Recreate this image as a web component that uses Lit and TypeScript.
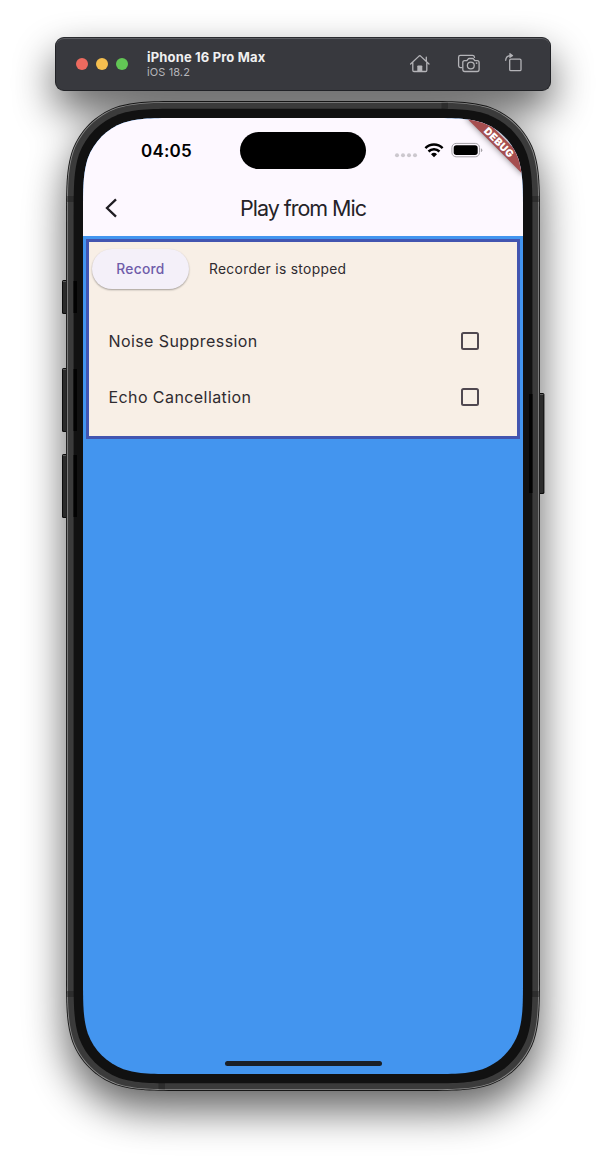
import { LitElement, html, svg, css } from "lit";
import { customElement, property } from "lit/decorators.js";

/** Path of a rectangle with continuous (squircle-like) corners. */
function smoothRect(x: number, y: number, w: number, h: number, r: number): string {
  const a = 1.52866 * r, b = 1.08849 * r, c = 0.86841 * r;
  const d = 0.63149 * r, e = 0.07491 * r, f = 0.37282 * r, g = 0.16906 * r;
  const R = x + w, B = y + h;
  return [
    `M${x + a} ${y}L${R - a} ${y}`,
    `C${R - b} ${y} ${R - c} ${y} ${R - d} ${y + e}`,
    `C${R - f} ${y + g} ${R - g} ${y + f} ${R - e} ${y + d}`,
    `C${R} ${y + c} ${R} ${y + b} ${R} ${y + a}L${R} ${B - a}`,
    `C${R} ${B - b} ${R} ${B - c} ${R - e} ${B - d}`,
    `C${R - g} ${B - f} ${R - f} ${B - g} ${R - d} ${B - e}`,
    `C${R - c} ${B} ${R - b} ${B} ${R - a} ${B}L${x + a} ${B}`,
    `C${x + b} ${B} ${x + c} ${B} ${x + d} ${B - e}`,
    `C${x + f} ${B - g} ${x + g} ${B - f} ${x + e} ${B - d}`,
    `C${x} ${B - c} ${x} ${B - b} ${x} ${B - a}L${x} ${y + a}`,
    `C${x} ${y + b} ${x} ${y + c} ${x + e} ${y + d}`,
    `C${x + g} ${y + f} ${x + f} ${y + g} ${x + d} ${y + e}`,
    `C${x + c} ${y} ${x + b} ${y} ${x + a} ${y}Z`,
  ].join("");
}

const SIDE_KEYS = [
  { x: 62, y: 280, h: 34, well: 73.5 },
  { x: 62, y: 368, h: 64, well: 73.5 },
  { x: 62, y: 454, h: 64, well: 73.5 },
  { x: 538, y: 393, h: 101, well: 529 },
];

@customElement("device-frame")
export class DeviceFrame extends LitElement {
  static styles = css`
    :host { display: block; }
    svg { display: block; }
  `;
  render() {
    return html`<svg width="606" height="1166" viewBox="0 0 606 1166">
      <defs>
        <filter id="soft" x="-30%" y="-30%" width="160%" height="160%">
          <feGaussianBlur stdDeviation="21" />
        </filter>
      </defs>
      <g filter="url(#soft)" opacity="0.62" transform="translate(0 19)">
        <rect x="55" y="37" width="496" height="54" rx="9" />
        <path d=${smoothRect(66, 101, 474, 990, 79)} />
      </g>
      ${SIDE_KEYS.map((k) => svg`
        <rect x=${k.x} y=${k.y} width="6.4" height=${k.h} rx="1.5" fill="#0c0c0c"/>
        <rect x=${k.x + 1} y=${k.y + 1} width="4.4" height=${k.h - 2} rx="1" fill="#2b2b2b"/>
        <rect x=${k.x + 1} y=${k.y + 1} width="4.4" height="0.8" fill="#6a6a6a"/>`)}
      <path d=${smoothRect(66, 101, 474, 990, 79)} fill="#161616" />
      <path d=${smoothRect(66.9, 101.9, 472.2, 988.2, 78.2)} fill="#8b8b8b" />
      <path d=${smoothRect(67.8, 102.8, 470.4, 986.4, 77.4)} fill="#3b3b3b" />
      <g fill="#2d2d2d">
        <rect x="67.500" y="196" width="7" height="6" />
        <rect x="531" y="196" width="7.500" height="6" />
        <rect x="67.500" y="991" width="7" height="6" />
        <rect x="531" y="991" width="7.500" height="6" />
        <rect x="441.500" y="102.800" width="6.500" height="7" />
        <rect x="158.500" y="1082" width="6.500" height="7.200" />
      </g>
      <path d=${smoothRect(73.6, 108.8, 458.8, 974.5, 72)} fill="#111" />
      ${SIDE_KEYS.map((k) => svg`<rect x=${k.well} y=${k.y + 1} width="3.5" height=${k.h - 2} fill="#020202"/>`)}
    </svg>`;
  }
}

@customElement("simulator-bar")
export class SimulatorBar extends LitElement {
  static styles = css`
    :host {
      display: flex;
      align-items: center;
      box-sizing: border-box;
      width: 496px;
      height: 54px;
      padding: 0 26px 0 21px;
      border: 1px solid #212226;
      border-top-color: #2a2b2f;
      border-radius: 9px;
      background: #38393e;
      box-shadow: inset 0 1px 0 #5c5d62;
      font-family: Inter, sans-serif;
    }
    .lights { display: flex; gap: 8px; margin-left: -1px; }
    .light { width: 12px; height: 12px; border-radius: 50%; }
    .close { background: #ed6a5f; }
    .min { background: #f5bf4f; }
    .max { background: #62c655; }
    .titles { flex: 1; margin-left: 19px; }
    .name { font-size: 13px; font-weight: 700; line-height: 15px; color: #f0f0f1; letter-spacing: 0.16px; white-space: nowrap; }
    .os { font-size: 11px; line-height: 14px; color: #b6b6ba; letter-spacing: 0.1px; }
    svg { display: block; fill: none; stroke: #b4b4b8; stroke-width: 1.3; stroke-linecap: round; stroke-linejoin: round; }
    .solid { fill: #b4b4b8; stroke: none; }
  `;
  render() {
    return html`
      <div class="lights">
        <div class="light close"></div><div class="light min"></div><div class="light max"></div>
      </div>
      <div class="titles">
        <div class="name">iPhone 16 Pro Max</div>
        <div class="os">iOS 18.2</div>
      </div>
      <svg width="118" height="24" viewBox="406 52 118 24">
        <path d="M410.600 64L419 56.100Q419.800 55.400 420.600 56.100L429 64M426.300 61V57.200M412.800 62.400V70.300Q412.800 71.500 414 71.500H425.600Q426.800 71.500 426.800 70.300V62.400" />
        <path class="solid" d="M417.300 71.500V66.300Q417.300 65.500 418.100 65.500H421.500Q422.300 65.500 422.300 66.300V71.500Z" />
        <path d="M461.800 67.600H460.400Q458.600 67.600 458.600 65.800V57.200Q458.600 55.400 460.400 55.400H472.500Q474.200 55.400 474.500 57.300" />
        <path d="M464.700 60.700H466.200Q466.900 60.700 467.300 60.100L468 59.100Q468.400 58.500 469.100 58.500H472.600Q473.300 58.500 473.700 59.100L474.400 60.100Q474.800 60.700 475.500 60.700H477.200Q479.100 60.700 479.100 62.600V69.600Q479.100 71.500 477.200 71.500H464.700Q462.800 71.500 462.800 69.600V62.600Q462.800 60.700 464.700 60.700Z" />
        <circle cx="470.800" cy="65.500" r="3.400" />
        <circle class="solid" cx="476.600" cy="63.100" r="0.900" />
        <rect x="509.700" y="59.100" width="11.300" height="11.500" rx="1.200" />
        <path d="M505.700 60.300Q505.900 55.600 511 55.600" />
        <path class="solid" d="M509.400 53.300Q509.400 52.700 510 53L513 55.200Q513.400 55.600 513 56L510 58.100Q509.400 58.400 509.400 57.800Z" />
      </svg>`;
  }
}

@customElement("status-bar")
export class StatusBar extends LitElement {
  static styles = css`
    :host { display: grid; grid-template-columns: 157px 126px 157px; height: 62px; font-family: Inter, sans-serif; }
    .time { padding: 22px 0 0 58px; font-size: 17px; line-height: 22px; font-weight: 600; color: #000; letter-spacing: 0.2px; }
    .island { margin-top: 14px; height: 37px; border-radius: 19px; background: #000; }
    .signals { padding: 22px 0 0 27px; }
    svg { display: block; }
  `;
  render() {
    return html`
      <div class="time">04:05</div>
      <div class="island"></div>
      <div class="signals">
        <svg width="92" height="20" viewBox="393 140 92 20">
          <g fill="#ccc8ce">
            <circle cx="397" cy="155.200" r="2" /><circle cx="403" cy="155.200" r="2" />
            <circle cx="409" cy="155.200" r="2" /><circle cx="415" cy="155.200" r="2" />
          </g>
          <g fill="none" stroke="#000" stroke-width="2.500">
            <path d="M425.400 148.100A12.300 12.300 0 0 1 442.600 148.100" />
            <path d="M428.500 151.500A7.900 7.900 0 0 1 439.500 151.500" />
          </g>
          <path d="M434 157.300L431 154.300A4.300 4.300 0 0 1 437 154.300Z" />
          <rect x="451.900" y="143.400" width="27.600" height="13.400" rx="4.200" fill="none" stroke="#a5a2a7" />
          <rect x="453.700" y="145.200" width="24" height="9.800" rx="2.700" />
          <path d="M480.900 148.200Q482.300 148.800 482.300 150.200T480.900 152.200Z" fill="#a5a2a7" />
        </svg>
      </div>`;
  }
}

@customElement("option-row")
export class OptionRow extends LitElement {
  @property() label = "";
  static styles = css`
    :host { display: flex; align-items: center; justify-content: space-between; height: 56px; padding: 0 38px 0 19.4px; }
    .label { font-size: 16px; line-height: 24px; letter-spacing: 0.43px; color: #2f2b30; }
    .box { box-sizing: border-box; width: 18px; height: 18px; border: 2px solid #504850; border-radius: 2.5px; }
  `;
  render() {
    return html`<span class="label">${this.label}</span><span class="box"></span>`;
  }
}

@customElement("app-root")
export class AppRoot extends LitElement {
  static styles = css`
    :host { display: block; position: relative; width: 606px; height: 1166px; overflow: hidden; background: #fff; font-family: Inter, sans-serif; }
    device-frame { position: absolute; inset: 0; }
    .stack { position: relative; display: flex; flex-direction: column; align-items: center; gap: 27px; padding-top: 37px; }
    .screen { position: relative; display: flex; flex-direction: column; width: 440px; height: 956px; background: #4395ef; }
    .top { height: 118px; background: #fdf8ff; }
    .appbar { display: grid; grid-template-columns: 56px 1fr 56px; align-items: center; height: 56px; }
    .back { display: block; margin-left: 15.5px; }
    .title { text-align: center; font-size: 21.5px; font-weight: 370; line-height: 28px; letter-spacing: -1.03px; color: #252328; white-space: nowrap; }
    .card { box-sizing: border-box; height: 200px; margin: 3px; padding-top: 3px; border: 3px solid #4355b0; background: #f8efe6; }
    .controls { display: flex; align-items: center; gap: 20px; height: 48px; padding-left: 3px; margin-bottom: 20px; }
    .record { width: 97px; height: 40px; padding: 0; border: 0; border-radius: 20px; background: #f4f0f9; box-shadow: 0 1px 2px rgba(0,0,0,.28), 0 1px 2px rgba(0,0,0,.08); color: #6f5caa; font: 500 13.8px/20px Inter, sans-serif; letter-spacing: 0.25px; }
    .state { font-size: 13.8px; line-height: 20px; letter-spacing: 0.32px; color: #2f2b30; }
    .home { width: 157px; height: 5px; margin: auto auto 8px; border-radius: 3px; background: #1a2027; }
    .debug { position: absolute; left: 376px; top: 18px; width: 80px; height: 12px; transform: rotate(45deg); background: #a54e4f; box-shadow: 0 0 6px rgba(0,0,0,.5); color: #fff; font: 900 10.2px/12px Inter, sans-serif; letter-spacing: 0.45px; text-indent: 1px; text-align: center; }
  `;
  render() {
    return html`
      <device-frame></device-frame>
      <div class="stack">
        <simulator-bar></simulator-bar>
        <div class="screen" style="clip-path: path('${smoothRect(0, 0, 440, 956, 64)}')">
          <div class="top">
            <status-bar></status-bar>
            <div class="appbar">
              <svg class="back" width="24" height="24" viewBox="0 0 24 24" fill="none" stroke="#1f1d22" stroke-width="2.300">
                <path d="M17 3.300L8 12L17 20.700" />
              </svg>
              <div class="title">Play from Mic</div>
            </div>
          </div>
          <div class="card">
            <div class="controls">
              <button class="record">Record</button>
              <span class="state">Recorder is stopped</span>
            </div>
            <option-row label="Noise Suppression"></option-row>
            <option-row label="Echo Cancellation"></option-row>
          </div>
          <div class="home"></div>
          <div class="debug">DEBUG</div>
        </div>
      </div>`;
  }
}
